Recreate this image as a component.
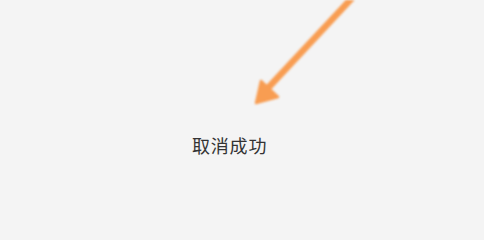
export default function App() {
  return (
    <div className="relative w-full min-w-[484px] h-screen min-h-[220px] overflow-hidden bg-[#f4f4f4]">
      <div className="pt-[133px] pl-[192px] text-[18px] leading-[24px] tracking-[0.8px] text-[#333333] font-['Noto_Sans_CJK_SC',sans-serif]">
        取消成功
      </div>

      {/* annotation arrow */}
      <svg
        className="absolute left-0 top-0 blur-[0.9px]"
        width="484"
        height="220"
        viewBox="0 0 484 220"
      >
        <line x1="353" y1="-3" x2="268" y2="88" stroke="#f89d52" strokeWidth="6.5" strokeLinecap="round" />
        <polygon points="256,103 261,81 278,97" fill="#f89d52" stroke="#f89d52" strokeWidth="2.5" strokeLinejoin="round" />
      </svg>
    </div>
  );
}
